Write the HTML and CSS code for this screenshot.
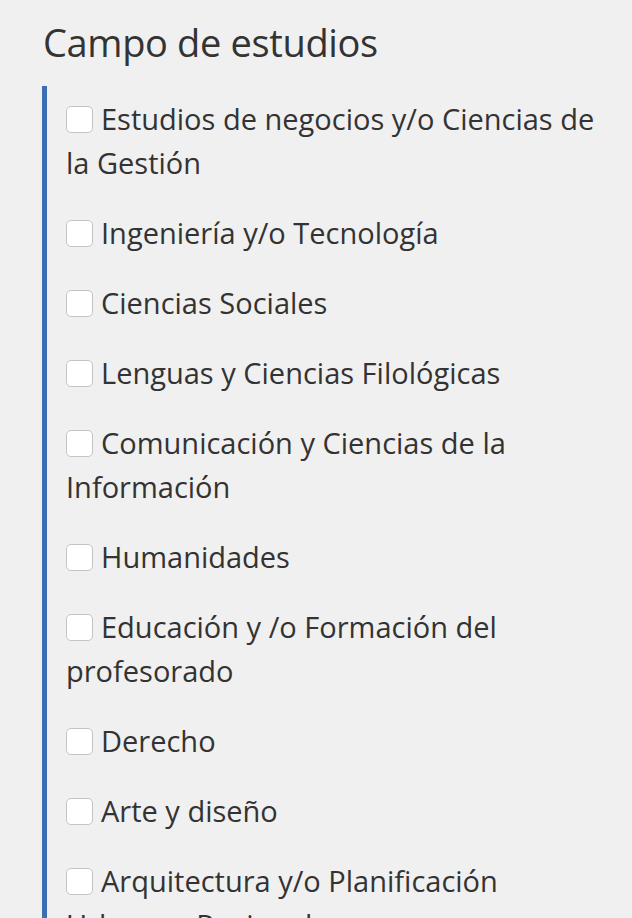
FILE: index.html
```html
<!DOCTYPE html>
<html lang="es">
<head>
<meta charset="utf-8">
<link rel="stylesheet" href="styles.css">
</head>
<body>
<section class="field">
  <h2 class="field-title">Campo de estudios</h2>
  <div class="options">
    <label class="option"><input type="checkbox" class="box"><span class="sp"></span>Estudios de negocios y/o Ciencias de la Gestión</label>
    <label class="option"><input type="checkbox" class="box"><span class="sp"></span>Ingeniería y/o Tecnología</label>
    <label class="option"><input type="checkbox" class="box"><span class="sp"></span>Ciencias Sociales</label>
    <label class="option"><input type="checkbox" class="box"><span class="sp"></span>Lenguas y Ciencias Filológicas</label>
    <label class="option"><input type="checkbox" class="box"><span class="sp"></span>Comunicación y Ciencias de la Información</label>
    <label class="option"><input type="checkbox" class="box"><span class="sp"></span>Humanidades</label>
    <label class="option"><input type="checkbox" class="box"><span class="sp"></span>Educación y /o Formación del profesorado</label>
    <label class="option"><input type="checkbox" class="box"><span class="sp"></span>Derecho</label>
    <label class="option"><input type="checkbox" class="box"><span class="sp"></span>Arte y diseño</label>
    <label class="option"><input type="checkbox" class="box"><span class="sp"></span>Arquitectura y/o Planificación Urbana y Regional</label>
  </div>
</section>
</body>
</html>
```
FILE: styles.css
```css
html, body {
  margin: 0;
  padding: 0;
  background: #f0f0f0;
  height: 100%;
  overflow: hidden;
}
body {
  font-family: "Open Sans", "Noto Sans", sans-serif;
  color: #333333;
}
.field {
  padding: 16px 35px 0 42px;
}
.field-title {
  margin: 0 0 18px 1px;
  font-size: 38px;
  line-height: 52px;
  font-weight: 400;
  letter-spacing: -0.35px;
  color: #333333;
}
.options {
  border-left: 5px solid #3c6fb2;
  padding: 11px 0 0 19px;
  display: flex;
  flex-direction: column;
  gap: 26px;
  min-height: 900px;
}
.option {
  display: block;
  font-size: 29px;
  line-height: 44px;
  font-stretch: 96%;
}
.box {
  -webkit-appearance: none;
  appearance: none;
  margin: 0;
  width: 27px;
  height: 27px;
  background: #ffffff;
  border: 1px solid #c4c4c4;
  border-radius: 5px;
  vertical-align: middle;
  position: relative;
  top: -3px;
  box-sizing: border-box;
}
.sp {
  display: inline-block;
  width: 8px;
}
```
